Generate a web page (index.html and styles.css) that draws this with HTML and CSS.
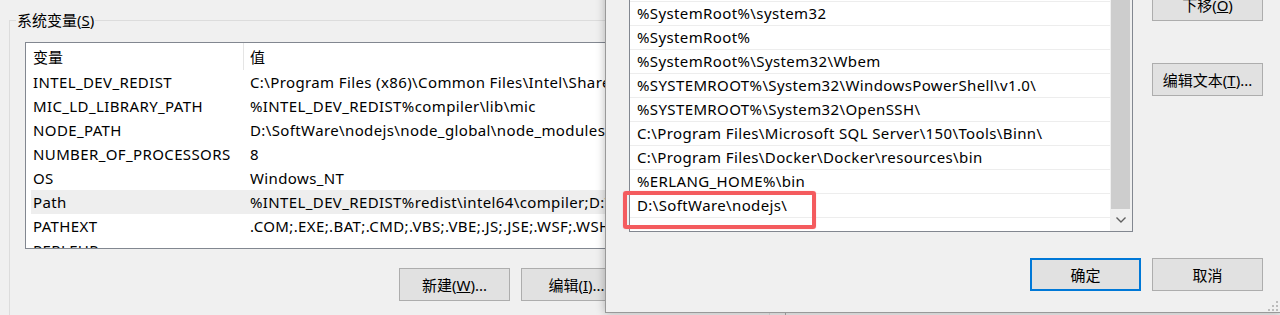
FILE: index.html
```html
<!DOCTYPE html>
<html lang="zh-CN">
<head>
    <meta charset="UTF-8">
    <meta name="viewport" content="width=device-width, initial-scale=1.0">
    <title>编辑环境变量</title>
    <link rel="stylesheet" href="styles.css">
</head>
<body>
    <div class="desktop">
        <!-- 环境变量窗口 (后面) -->
        <div class="env-window">
            <fieldset class="group">
                <legend>系统变量(<u>S</u>)</legend>
                <div class="var-list">
                    <div class="var-head">
                        <div class="col-name">变量</div>
                        <div class="col-value">值</div>
                    </div>
                    <div class="var-row"><div class="col-name">INTEL_DEV_REDIST</div><div class="col-value">C:\Program Files (x86)\Common Files\Intel\Shared Libraries\</div></div>
                    <div class="var-row"><div class="col-name">MIC_LD_LIBRARY_PATH</div><div class="col-value">%INTEL_DEV_REDIST%compiler\lib\mic</div></div>
                    <div class="var-row"><div class="col-name">NODE_PATH</div><div class="col-value">D:\SoftWare\nodejs\node_global\node_modules</div></div>
                    <div class="var-row"><div class="col-name">NUMBER_OF_PROCESSORS</div><div class="col-value">8</div></div>
                    <div class="var-row"><div class="col-name">OS</div><div class="col-value">Windows_NT</div></div>
                    <div class="var-row selected"><div class="col-name">Path</div><div class="col-value">%INTEL_DEV_REDIST%redist\intel64\compiler;D:\SoftWare\nodejs\</div></div>
                    <div class="var-row"><div class="col-name">PATHEXT</div><div class="col-value">.COM;.EXE;.BAT;.CMD;.VBS;.VBE;.JS;.JSE;.WSF;.WSH;.MSC</div></div>
                    <div class="var-row"><div class="col-name">PERLEHP</div><div class="col-value"></div></div>
                </div>
                <div class="group-actions">
                    <button class="btn">新建(<u>W</u>)...</button>
                    <button class="btn">编辑(<u>I</u>)...</button>
                    <button class="btn">删除(<u>L</u>)</button>
                </div>
            </fieldset>
        </div>

        <!-- 编辑环境变量对话框 (前面) -->
        <div class="edit-dialog">
            <div class="path-list">
                <div class="path-rows">
                    <div class="path-row">%SystemRoot%\system32</div>
                    <div class="path-row">%SystemRoot%</div>
                    <div class="path-row">%SystemRoot%\System32\Wbem</div>
                    <div class="path-row">%SYSTEMROOT%\System32\WindowsPowerShell\v1.0\</div>
                    <div class="path-row">%SYSTEMROOT%\System32\OpenSSH\</div>
                    <div class="path-row">C:\Program Files\Microsoft SQL Server\150\Tools\Binn\</div>
                    <div class="path-row">C:\Program Files\Docker\Docker\resources\bin</div>
                    <div class="path-row">%ERLANG_HOME%\bin</div>
                    <div class="path-row">D:\SoftWare\nodejs\</div>
                </div>
                <div class="scrollbar">
                    <div class="scroll-track"><div class="scroll-thumb"></div></div>
                    <div class="scroll-arrow">
                        <svg width="22" height="22" viewBox="0 0 22 22"><polyline points="6.5,8.5 11,13 15.5,8.5" fill="none" stroke="#606060" stroke-width="1.4"/></svg>
                    </div>
                </div>
                <div class="mark"></div>
            </div>

            <div class="side-actions">
                <button class="btn">下移(<u>O</u>)</button>
                <button class="btn btn-gap">编辑文本(<u>T</u>)...</button>
            </div>

            <div class="dialog-actions">
                <button class="btn btn-default">确定</button>
                <button class="btn">取消</button>
            </div>

            <svg class="grip" width="12" height="12" viewBox="0 0 12 12">
                <rect x="9" y="1" width="2" height="2"/>
                <rect x="5" y="5" width="2" height="2"/>
                <rect x="9" y="5" width="2" height="2"/>
                <rect x="1" y="9" width="2" height="2"/>
                <rect x="5" y="9" width="2" height="2"/>
                <rect x="9" y="9" width="2" height="2"/>
            </svg>
        </div>
    </div>
</body>
</html>
```

FILE: styles.css
```css
* {
    box-sizing: border-box;
}

body {
    margin: 0;
    background-color: #f0f0f0;
    font-family: 'Noto Sans', 'Noto Sans CJK SC', sans-serif;
    font-size: 15px;
    color: #000;
    overflow: hidden;
}

.desktop {
    position: relative;
    width: 1280px;
    height: 315px;
    overflow: hidden;
}

/* 后面的窗口 */
.env-window {
    width: 786px;
    height: 315px;
    padding: 10px 0 0 9px;
    background-color: #f0f0f0;
    border-right: 1px solid #a8a8a8;
}

.group {
    margin: 0;
    min-width: 0;
    width: 761px;
    height: 340px;
    padding: 0 15px;
    border: 1px solid #dcdcdc;
}

.group legend {
    margin-left: -9px;
    padding: 0 1px;
    line-height: 20px;
}

.var-list {
    margin-top: 12px;
    width: 729px;
    height: 207px;
    background-color: #fff;
    border: 1px solid #828790;
    padding-left: 5px;
    overflow: hidden;
}

.var-head,
.var-row {
    display: grid;
    grid-template-columns: 213px 1fr;
    white-space: nowrap;
}

.var-head {
    height: 27px;
    line-height: 29px;
}

.var-row {
    height: 24px;
    line-height: 24px;
    letter-spacing: 0.38px;
}

.var-row.selected {
    background-color: #eeeeee;
}

.col-name {
    padding-left: 2px;
    overflow: hidden;
}

.var-head .col-name {
    border-right: 1px solid #e5e5e5;
}

.col-value {
    padding-left: 6px;
    overflow: hidden;
}

.group-actions {
    margin-top: 19px;
    width: 729px;
    display: flex;
    justify-content: flex-end;
    gap: 11px;
}

.btn {
    width: 111px;
    height: 33px;
    padding: 0;
    font-family: inherit;
    font-size: 15px;
    color: #000;
    background-color: #e1e1e1;
    border: 1px solid #adadad;
    border-radius: 0;
}

.btn-default {
    border: 2px solid #0078d7;
}

/* 编辑环境变量对话框 */
.edit-dialog {
    position: absolute;
    left: 605px;
    bottom: 2px;
    width: 676px;
    display: grid;
    grid-template-columns: 504px 111px;
    column-gap: 19px;
    row-gap: 26px;
    padding: 12px 17px 21px 23px;
    background-color: #f0f0f0;
    border: 1px solid #999;
    box-shadow: 0 0 9px rgba(0, 0, 0, 0.28);
}

.path-list {
    position: relative;
    height: 244px;
    display: flex;
    background-color: #fff;
    border: 1px solid #828790;
}

.path-rows {
    flex: 1;
    display: flex;
    flex-direction: column;
    justify-content: flex-end;
    padding-bottom: 13px;
    overflow: hidden;
}

.path-row {
    flex-shrink: 0;
    height: 24px;
    line-height: 23px;
    padding-left: 7px;
    border-bottom: 1px solid #ededed;
    letter-spacing: 0.38px;
    white-space: nowrap;
    overflow: hidden;
}

.path-row:first-child {
    height: 25px;
    border-top: 1px solid #ededed;
}

.scrollbar {
    width: 22px;
    display: flex;
    flex-direction: column;
    background-color: #f0f0f0;
}

.scroll-arrow {
    height: 22px;
}

.scroll-arrow svg {
    display: block;
}

.scroll-track {
    flex: 1;
    display: flex;
    flex-direction: column;
}

.scroll-thumb {
    flex: 1;
    margin: 0 2px 0 1px;
    background-color: #cdcdcd;
}

.mark {
    position: absolute;
    left: -7px;
    bottom: 2px;
    width: 193px;
    height: 38px;
    border: 4px solid #f45b5e;
    border-radius: 3px;
    box-shadow: 0 0 1px rgba(244, 91, 94, 0.6);
}

.side-actions {
    display: flex;
    flex-direction: column;
}

.btn-gap {
    margin-top: 42px;
}

.dialog-actions {
    grid-column: 1 / 3;
    display: flex;
    justify-content: flex-end;
    gap: 11px;
}

.grip {
    position: absolute;
    right: 1px;
    bottom: 0;
    fill: #bcbcbc;
}
```
